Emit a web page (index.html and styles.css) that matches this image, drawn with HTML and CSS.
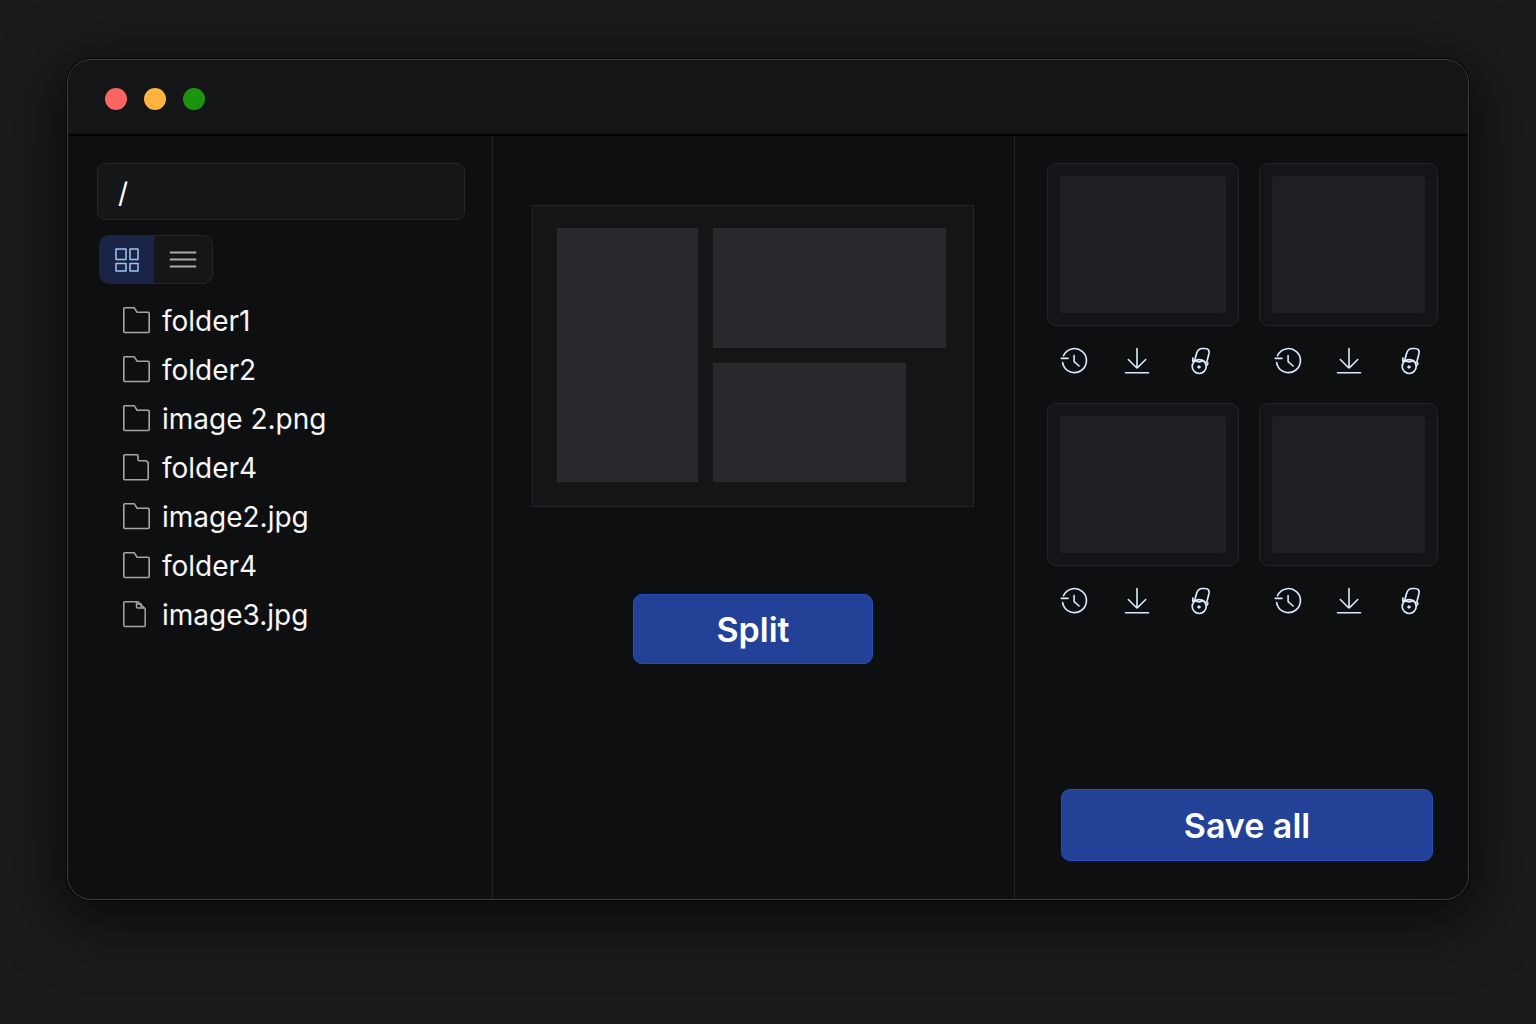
FILE: index.html
```html
<!DOCTYPE html>
<html lang="en">
<head>
<meta charset="utf-8">
<meta name="viewport" content="width=device-width, initial-scale=1">
<title>Image splitter</title>
<link rel="stylesheet" href="styles.css">
</head>
<body>
<svg class="sprite" aria-hidden="true">
  <symbol id="folder" viewBox="0 1 28 28"><path stroke-width="1.6" d="M1.8 2.8q0-1 1-1H11.6q.9 0 1.3.8L14.8 5.800q.3.5 1 .5H26q1.200 0 1.200 1.200V25.500q0 1-1 1H2.800q-1 0-1-1Z"/></symbol>
  <symbol id="folder-tab" viewBox="0 1 28 28"><path stroke-width="1.6" d="M1.8 2.8q0-1 1-1H15q1 0 1 1V6.500q0 1.200 1.200 1.200H24l2.200 2V25.500q0 1.200-1 1.200H2.800q-1 0-1-1Z"/></symbol>
  <symbol id="file" viewBox="0 1 28 28"><path stroke-width="1.5" d="M1.8 2.8q0-1 1-1H16L23.200 8.800V25.500q0 1-1 1H2.800q-1 0-1-1Z"/><path stroke-width="1.5" d="M14.500 3v3.800q0 1.200 1.200 1.200H22M15 4h4v3.500"/></symbol>
  <symbol id="history" viewBox="0 0 28 28"><path stroke-width="1.6" d="M3.500 8.700A12 12 0 1 1 3.100 17.500M1.300 11.400H8M2.700 15.500l.4 2.500M14.100 8.500v6.200l5 4.300"/></symbol>
  <symbol id="download" viewBox="0 0 28 28"><path stroke-width="1.6" d="M14 1.500V20.800M5.300 12.500l8 8q.7.600 1.400 0l8-8M2.500 25.800h23"/></symbol>
  <symbol id="lock" viewBox="0 0 28 28"><path stroke-width="1.7" d="M8.800 12.800 10.800 5.800Q12.200 1.500 16.500 1.500h2.300q5.200.3 4.200 5L21.200 13.500q-.4 1.200-1.200 1.800"/><path stroke-width="1.7" d="M6.800 11v3.200l2.200-.4M21.800 15.800q.2 2.200-1.600 2.800"/><ellipse cx="13.200" cy="19.600" rx="7" ry="6.900" stroke-width="1.700"/><path stroke-width="1.700" d="M9 13.800q4.200 2.200 8.600-.2"/><circle cx="12.900" cy="20" r="1.200" fill="currentColor"/></symbol>
</svg>
<main class="window">
  <header class="titlebar">
    <button class="dot dot-close" aria-label="Close"></button>
    <button class="dot dot-minimize" aria-label="Minimize"></button>
    <button class="dot dot-zoom" aria-label="Zoom"></button>
  </header>
  <div class="panes">
    <section class="files" aria-label="Files">
      <input class="path" type="text" value="/" aria-label="Path">
      <div class="views" role="group" aria-label="View">
        <button class="view view-grid" aria-label="Grid view" aria-pressed="true">
          <svg viewBox="0 0 24 24"><path stroke-width="1.5" d="M1 1h10v10.500H1ZM15 1h8v10.500h-8ZM1 15.500h10v7.500H1ZM15 15.500h8v7.500h-8Z"/></svg>
        </button>
        <button class="view view-list" aria-label="List view" aria-pressed="false">
          <svg viewBox="0 0 28 24"><path stroke-width="1.8" d="M1.500 4.500h25M1.500 11.500h25M1.500 18.500h25"/></svg>
        </button>
      </div>
      <ul class="list">
        <li><a href="#"><svg class="icon"><use href="#folder"/></svg>folder1</a></li>
        <li><a href="#"><svg class="icon"><use href="#folder"/></svg>folder2</a></li>
        <li><a href="#"><svg class="icon"><use href="#folder"/></svg>image 2.png</a></li>
        <li><a href="#"><svg class="icon"><use href="#folder-tab"/></svg>folder4</a></li>
        <li><a href="#"><svg class="icon"><use href="#folder"/></svg>image2.jpg</a></li>
        <li><a href="#"><svg class="icon"><use href="#folder"/></svg>folder4</a></li>
        <li><a href="#"><svg class="icon"><use href="#file"/></svg>image3.jpg</a></li>
      </ul>
    </section>
    <section class="editor" aria-label="Layout">
      <div class="canvas">
        <div class="tile tile-tall"></div>
        <div class="tile"></div>
        <div class="tile tile-short"></div>
      </div>
      <button class="primary split">Split</button>
    </section>
    <section class="results" aria-label="Results">
      <div class="cards">
        <article class="card">
          <div class="frame"><div class="thumb"></div></div>
          <div class="actions">
            <button aria-label="History"><svg class="icon"><use href="#history"/></svg></button>
            <button aria-label="Download"><svg class="icon"><use href="#download"/></svg></button>
            <button aria-label="Lock"><svg class="icon"><use href="#lock"/></svg></button>
          </div>
        </article>
        <article class="card">
          <div class="frame"><div class="thumb"></div></div>
          <div class="actions">
            <button aria-label="History"><svg class="icon"><use href="#history"/></svg></button>
            <button aria-label="Download"><svg class="icon"><use href="#download"/></svg></button>
            <button aria-label="Lock"><svg class="icon"><use href="#lock"/></svg></button>
          </div>
        </article>
        <article class="card">
          <div class="frame"><div class="thumb"></div></div>
          <div class="actions">
            <button aria-label="History"><svg class="icon"><use href="#history"/></svg></button>
            <button aria-label="Download"><svg class="icon"><use href="#download"/></svg></button>
            <button aria-label="Lock"><svg class="icon"><use href="#lock"/></svg></button>
          </div>
        </article>
        <article class="card">
          <div class="frame"><div class="thumb"></div></div>
          <div class="actions">
            <button aria-label="History"><svg class="icon"><use href="#history"/></svg></button>
            <button aria-label="Download"><svg class="icon"><use href="#download"/></svg></button>
            <button aria-label="Lock"><svg class="icon"><use href="#lock"/></svg></button>
          </div>
        </article>
      </div>
      <button class="primary save">Save all</button>
    </section>
  </div>
</main>
</body>
</html>
```
FILE: styles.css
```css
* { box-sizing: border-box; }

body {
  margin: 0;
  min-height: 100vh;
  padding: 59px 67px 124px;
  background: #1b1b1d;
  color: #f7f7f8;
  font-family: Inter, "Liberation Sans", sans-serif;
  font-size: 28px;
}

button {
  margin: 0;
  padding: 0;
  border: 0;
  background: none;
  color: inherit;
  font: inherit;
  cursor: pointer;
}

svg {
  display: block;
  fill: none;
  stroke: currentColor;
  stroke-linecap: round;
  stroke-linejoin: round;
}

.sprite { display: none; }

.icon {
  flex: none;
  width: 28px;
  height: 28px;
}

.window {
  display: flex;
  flex-direction: column;
  min-height: calc(100vh - 183px);
  overflow: hidden;
  border: 1px solid #3e3f41;
  border-radius: 24px;
  background: #0e0f11;
  box-shadow: 0 0 0 1px #060607, 0 14px 64px 6px rgba(0, 0, 0, 0.65);
}

.titlebar {
  display: flex;
  align-items: center;
  gap: 17px;
  height: 76px;
  padding: 3px 37px 0;
  border-bottom: 2px solid #030304;
  background: #141517;
}

.dot {
  width: 22px;
  height: 22px;
  border-radius: 50%;
}

.dot-close { background: #fb6561; }
.dot-minimize { background: #feb43f; }
.dot-zoom { background: #1d930f; }

.panes {
  flex: 1;
  display: grid;
  grid-template-columns: 425fr 522fr 453fr;
}

.files {
  padding: 27px 27px 27px 29px;
  border-right: 1px solid #222326;
}

.path {
  display: block;
  width: 100%;
  height: 57px;
  padding: 2px 20px 0;
  border: 1px solid #24262b;
  border-radius: 8px;
  outline: 0;
  background: #151618;
  color: #fff;
  font: inherit;
}

.views {
  display: flex;
  width: 114px;
  height: 49px;
  margin: 15px 0 12px 2px;
  overflow: hidden;
  border: 1px solid #25262a;
  border-radius: 10px;
  background: #151618;
}

.view {
  display: grid;
  place-items: center;
  width: 58px;
}

.view-grid {
  width: 54px;
  background: #1a2446;
  color: #9fc4f5;
}

.view-grid svg { width: 24px; height: 24px; }
.view-list { color: #a9aaac; }
.view-list svg { width: 28px; height: 24px; }

.list {
  margin: 0;
  padding: 0 0 0 25px;
  list-style: none;
}

.list a {
  display: flex;
  align-items: center;
  gap: 12px;
  height: 49px;
  color: inherit;
  text-decoration: none;
}

.list .icon { color: #a5a6a8; }

.editor {
  display: flex;
  flex-direction: column;
  align-items: center;
  gap: 87px;
  padding: 69px 40px 69px 39px;
  border-right: 1px solid #222326;
}

.canvas {
  display: grid;
  grid-template: 120px 119px / 141fr 233fr;
  gap: 15px;
  width: 100%;
  padding: 22px 27px 24px 24px;
  border: 1px solid #23242a;
  background: #141517;
}

.tile {
  border: 1px solid #2b2c30;
  background: #27282c;
}

.tile-tall { grid-row: span 2; }
.tile-short { width: 83%; }

.primary {
  border: 1px solid #2350bd;
  border-radius: 9px;
  background: #224197;
  color: #fff;
  font-size: 34px;
  font-weight: 600;
}

.split {
  width: 240px;
  height: 70px;
}

.results {
  display: flex;
  flex-direction: column;
  justify-content: space-between;
  padding: 27px 30px 38px 32px;
}

.cards {
  display: grid;
  grid-template-columns: 192fr 179fr;
  gap: 28px 20px;
}

.frame {
  height: 163px;
  padding: 12px;
  border: 1px solid #232429;
  border-radius: 9px;
  background: #141518;
}

.thumb {
  height: 100%;
  border-radius: 4px;
  background: #1f2025;
}

.actions {
  display: flex;
  justify-content: space-between;
  padding: 21px 14px 0 15px;
  color: #dcebff;
}

.card:nth-child(odd) .actions {
  padding-right: 25px;
  padding-left: 13px;
}

.save {
  height: 72px;
  margin: 0 5px 0 14px;
}
```
